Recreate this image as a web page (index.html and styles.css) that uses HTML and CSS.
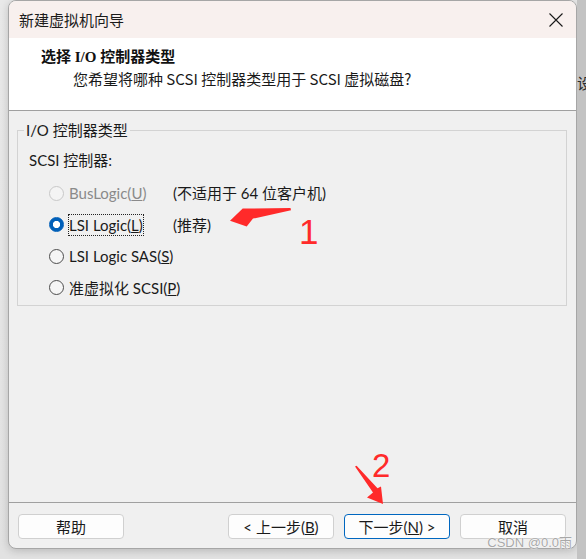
FILE: index.html
```html
<!DOCTYPE html>
<html lang="zh-CN">
<head>
<meta charset="utf-8">
<title>新建虚拟机向导</title>
<link rel="stylesheet" href="styles.css">
</head>
<body>
<div class="screen">
  <div class="window">
    <div class="titlebar">
      <span class="title">新建虚拟机向导</span>
      <span class="close">
        <svg width="14" height="14" viewBox="0 0 14 14"><path d="M0.5 0.5 L13.5 13.5 M13.5 0.5 L0.5 13.5" stroke="#1a1a1a" stroke-width="1.1" fill="none"/></svg>
      </span>
    </div>
    <div class="header">
      <div class="h-title">选择 I/O 控制器类型</div>
      <div class="h-sub">您希望将哪种 SCSI 控制器类型用于 SCSI 虚拟磁盘?</div>
    </div>
    <div class="content">
      <fieldset class="group">
        <legend>I/O 控制器类型</legend>
        <div class="sub-label">SCSI 控制器:</div>
        <div class="options">
          <div class="opt disabled"><span class="radio"></span><span class="lbl">BusLogic(<u>U</u>)</span></div>
          <div class="note">(不适用于 64 位客户机)</div>
          <div class="opt"><span class="radio checked"></span><span class="lbl focus">LSI Logic(<u>L</u>)</span></div>
          <div class="note">(推荐)</div>
          <div class="opt"><span class="radio"></span><span class="lbl">LSI Logic SAS(<u>S</u>)</span></div>
          <div class="note"></div>
          <div class="opt"><span class="radio"></span><span class="lbl">准虚拟化 SCSI(<u>P</u>)</span></div>
          <div class="note"></div>
        </div>
      </fieldset>
    </div>
    <div class="footer">
      <button class="btn">帮助</button>
      <span class="spacer"></span>
      <button class="btn">&lt; 上一步(<u>B</u>)</button>
      <button class="btn primary">下一步(<u>N</u>) &gt;</button>
      <button class="btn">取消</button>
    </div>
  </div>
  <div class="side"><span class="side-glyph">设</span></div>

  <svg class="annot" width="586" height="559" viewBox="0 0 586 559">
    <polygon points="230,220.7 242.7,208.6 290.5,208 291,210.3 253,218.6 246.7,226.5" fill="#ff2a2a"/>
    <text x="299" y="244" class="num">1</text>
    <polygon points="355,466.6 356.6,465.8 377.5,488.3 381,486.4 383,504 367,497.6 373,492.6" fill="#ff2a2a"/>
    <text x="372" y="477" class="num n2">2</text>
  </svg>
  <div class="watermark">CSDN @0.0雨</div>
</div>
</body>
</html>
```
FILE: styles.css
```css
body {
  margin: 0;
  background: #e6e6e6;
  font-family: "Lato", "Noto Sans CJK SC", sans-serif;
  font-size: 15px;
  color: #1a1a1a;
}

.screen {
  position: relative;
  display: flex;
  width: 586px;
  height: 559px;
  overflow: hidden;
  background: linear-gradient(to bottom, #e9e9e9, #e2e2e2);
}

.window {
  margin-left: 8px;
  width: 569px;
  height: 549px;
  box-sizing: border-box;
  border: 1px solid #a6a6a6;
  border-radius: 8px;
  background: #f0f0f0;
  display: flex;
  flex-direction: column;
  overflow: hidden;
  box-shadow: 0 2px 8px rgba(0, 0, 0, 0.18);
  flex: none;
}

.titlebar {
  height: 37px;
  flex: none;
  background: #f8f0ee;
  display: flex;
  align-items: center;
  justify-content: space-between;
  padding: 0 13px 0 10px;
}

.title {
  font-family: "Noto Sans CJK SC", sans-serif;
  font-size: 15px;
  line-height: 20px;
  color: #1b1b1b;
}

.close {
  display: flex;
  width: 14px;
  height: 14px;
}

.header {
  height: 73px;
  flex: none;
  box-sizing: border-box;
  background: #ffffff;
  border-bottom: 1px solid #a0a0a0;
  padding: 9px 0 0 32px;
}

.h-title {
  font-family: "Liberation Serif", "Noto Sans CJK SC", serif;
  font-weight: bold;
  font-size: 15px;
  line-height: 20px;
  color: #111;
}

.h-sub {
  margin-top: 2px;
  padding-left: 32px;
  font-family: "Noto Sans CJK SC", sans-serif;
  font-size: 15px;
  line-height: 20px;
  color: #1a1a1a;
}

.content {
  flex: 1;
  display: flex;
  flex-direction: column;
}

.group {
  margin: 9px 9px 0 8px;
  border: 1px solid #d3d3d3;
  padding: 0 0 1px 11px;
  min-inline-size: 0;
}

.group legend {
  padding: 0 2px;
  margin-left: -5px;
  line-height: 20px;
  font-size: 15px;
}

.sub-label {
  margin-top: 10px;
  line-height: 20px;
}

.options {
  margin: 7.5px 0 0 20px;
  display: grid;
  grid-template-columns: 124px auto;
  grid-auto-rows: 31.5px;
  align-items: center;
}

.opt {
  display: flex;
  align-items: center;
}

.radio {
  width: 15px;
  height: 15px;
  box-sizing: border-box;
  border-radius: 50%;
  border: 1px solid #4d4d4d;
  background: #f6f6f6;
  flex: none;
}

.radio.checked {
  border-color: #005fb8;
  background: radial-gradient(circle, #ffffff 0 3.3px, #005fb8 3.9px);
}

.opt.disabled .radio {
  border-color: #c8c8c8;
  background: #f4f4f4;
}

.opt.disabled .lbl {
  color: #8a8a8a;
}

.lbl {
  margin-left: 4px;
  line-height: 20px;
  border: 1px dotted transparent;
  white-space: nowrap;
}

.lbl.focus {
  border-color: #222;
}

.note {
  line-height: 20px;
  white-space: nowrap;
}

.footer {
  height: 46px;
  flex: none;
  box-sizing: border-box;
  border-top: 1px solid #a0a0a0;
  padding: 11px 10px 0 9px;
  display: flex;
  gap: 10px;
}

.spacer {
  flex: 1;
}

.btn {
  width: 106px;
  height: 25px;
  box-sizing: border-box;
  background: #fdfdfd;
  border: 1px solid #d0d0d0;
  border-radius: 4px;
  font-family: "Lato", "Noto Sans CJK SC", sans-serif;
  font-size: 15px;
  line-height: 20px;
  color: #1a1a1a;
  padding: 0;
}

.btn.primary {
  border-color: #0067c0;
}

.side {
  width: 9px;
  background: #c3c3c3;
  overflow: hidden;
  padding-top: 73px;
  box-sizing: border-box;
  flex: none;
}

.side-glyph {
  display: block;
  font-family: "Noto Sans CJK SC", sans-serif;
  font-size: 15px;
  line-height: 20px;
  color: #2a2a2a;
  white-space: nowrap;
}

.annot {
  position: absolute;
  left: 0;
  top: 0;
  pointer-events: none;
}

.num {
  font-family: "Liberation Sans", sans-serif;
  font-size: 35px;
  fill: #ff2a2a;
}

.num.n2 {
  font-size: 33px;
}

.watermark {
  position: absolute;
  right: 14px;
  bottom: 9px;
  font-family: "Liberation Sans", "Noto Sans CJK SC", sans-serif;
  font-size: 13px;
  line-height: 14px;
  color: #a8a8a8;
  text-shadow: 0 0 1px #fff, 0 0 1px #fff;
}
```
